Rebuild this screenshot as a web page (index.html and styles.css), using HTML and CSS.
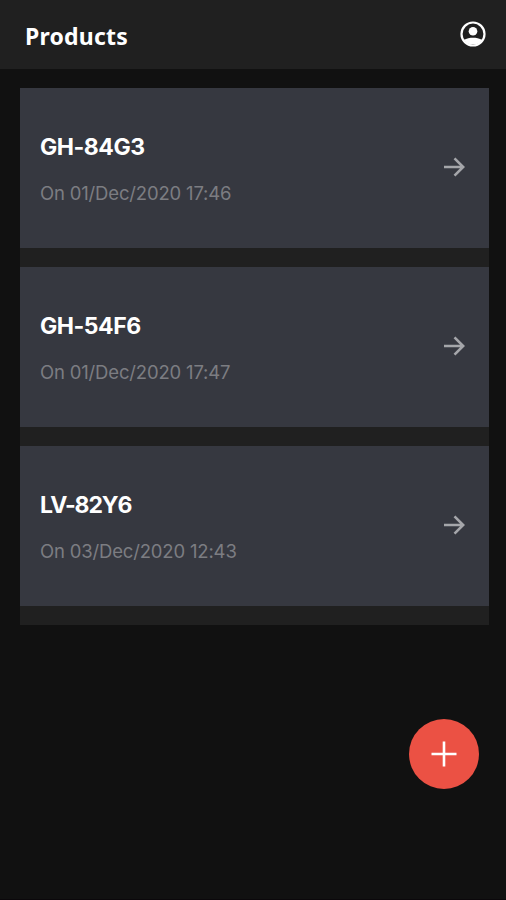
FILE: index.html
```html
<!DOCTYPE html>
<html lang="en">
<head>
<meta charset="utf-8">
<title>Products</title>
<link rel="stylesheet" href="styles.css">
</head>
<body>
<header class="topbar">
  <h1 class="heading">Products</h1>
  <svg class="account" viewBox="0 0 26 26" aria-label="Account">
    <circle cx="13" cy="13" r="11.500" fill="none" stroke="#fff" stroke-width="2.200"/>
    <circle cx="13" cy="10.300" r="4.300" fill="#fff"/>
    <path d="M3.800 19C6.500 17.300 10 16.800 13 16.800s6.500 .5 9.200 2.200A11.500 11.500 0 0 1 3.800 19Z" fill="#fff"/>
  </svg>
</header>
<main class="products">
  <article class="card">
    <div class="details"><h2 class="name">GH-84G3</h2><p class="date">On 01/Dec/2020 17:46</p></div>
    <svg class="arrow" viewBox="0 0 22 22"><path d="M1 11h19M11.500 2.300L20.200 11l-8.700 8.700"/></svg>
  </article>
  <article class="card">
    <div class="details"><h2 class="name">GH-54F6</h2><p class="date">On 01/Dec/2020 17:47</p></div>
    <svg class="arrow" viewBox="0 0 22 22"><path d="M1 11h19M11.500 2.300L20.200 11l-8.700 8.700"/></svg>
  </article>
  <article class="card">
    <div class="details"><h2 class="name name-tight">LV-82Y6</h2><p class="date">On 03/Dec/2020 12:43</p></div>
    <svg class="arrow" viewBox="0 0 22 22"><path d="M1 11h19M11.500 2.300L20.200 11l-8.700 8.700"/></svg>
  </article>
</main>
<button class="add" aria-label="Add product">
  <svg class="plus" viewBox="0 0 26 26"><path d="M13 .5v25M.5 13h25"/></svg>
</button>
</body>
</html>
```
FILE: styles.css
```css
* { box-sizing: border-box; }
body {
  margin: 0;
  height: 900px;
  overflow: hidden;
  background: #111;
  border-bottom: 1px solid #0b080b;
  color: #fff;
  font-family: Inter, "Liberation Sans", sans-serif;
}
.topbar {
  height: 69px;
  padding: 0 20px 0 25px;
  display: flex;
  align-items: center;
  justify-content: space-between;
  background: #202020;
}
.heading {
  margin: 2px 0 0;
  font: 700 23px/30px "Noto Sans", sans-serif;
  letter-spacing: 0.2px;
}
.account { width: 26px; height: 26px; margin-top: -2px; }
.products {
  margin: 19px 17px 0 20px;
  background: #202020;
  display: flex;
  flex-direction: column;
  gap: 19px;
  padding-bottom: 19px;
}
.card {
  height: 160px;
  padding: 0 24px 0 20px;
  display: flex;
  align-items: center;
  justify-content: space-between;
  background: #363840;
}
.name { margin: 2px 0 0; font-size: 23px; line-height: 30px; font-weight: 700; letter-spacing: -0.45px; }
.name-tight { letter-spacing: -1.1px; }
.date {
  margin: 17px 0 0;
  font-size: 18.5px;
  line-height: 28px;
  font-weight: 400;
  letter-spacing: -0.17px;
  color: #7c7d82;
}
.arrow { width: 22px; height: 22px; margin-top: -2px; }
.arrow path { fill: none; stroke: #a5a6aa; stroke-width: 2.6; }
.add {
  display: flex;
  align-items: center;
  justify-content: center;
  width: 70px;
  height: 70px;
  margin: 93.5px 27px 0 auto;
  padding: 0;
  border: 0;
  border-radius: 50%;
  background: #eb5144;
}
.plus { width: 26px; height: 26px; }
.plus path { stroke: #fff; stroke-width: 2.6; }
```
